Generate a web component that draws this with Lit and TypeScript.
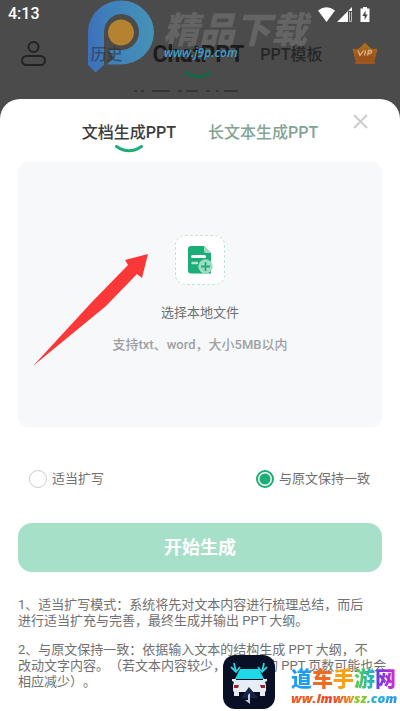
import { LitElement, html, css, svg } from "lit";
import { customElement, state } from "lit/decorators.js";

@customElement("app-root")
export class AppRoot extends LitElement {
  @state() private mode = "keep";

  static styles = css`
    :host {
      display: block;
      position: relative;
      min-height: 100vh;
      overflow: hidden;
      background: #4b4b4b;
      color: #707070;
      font-family: Roboto, "Noto Sans CJK SC", sans-serif;
      font-size: 13px;
      line-height: 16px;
      text-spacing-trim: space-all;
    }
    * { box-sizing: border-box; }
    svg { display: block; flex: none; }
    button {
      font: inherit;
      color: inherit;
      border: 0;
      padding: 0;
      margin: 0;
      background: none;
    }
    .page { display: flex; flex-direction: column; min-height: 100vh; }
    .status {
      display: flex;
      align-items: center;
      justify-content: space-between;
      height: 28px;
      padding: 0 30px 0 8px;
      color: #fff;
      font-size: 16px;
      font-weight: 500;
    }
    .status-icons { display: flex; align-items: center; gap: 2px; }
    .battery { margin-left: 6px; }
    .nav {
      position: relative;
      z-index: 1;
      display: flex;
      align-items: center;
      justify-content: space-between;
      height: 52px;
      padding: 0 22px 0 20px;
      color: #262626;
    }
    .nav-tabs {
      display: flex;
      align-items: center;
      gap: 16px;
      padding: 2px 0 0 14px;
      font-size: 16px;
      line-height: 24px;
      font-weight: 500;
    }
    .history { opacity: 0.5; width: 46px; }
    .current { font-size: 23px; font-weight: 700; color: #1c1c1c; position: relative; }
    .smile { position: absolute; left: 50%; top: 100%; transform: translateX(-50%); }
    .current .smile { margin-top: 4px; }
    .peek { height: 19px; padding-top: 10px; }
    .peek svg { margin: 0 auto; }
    .sheet {
      flex: 1;
      background: #fff;
      border-radius: 20px 20px 0 0;
      padding: 13px 18px 20px;
    }
    .sheet-head {
      display: grid;
      grid-template-columns: minmax(0, 1fr) auto auto minmax(0, 1fr);
      height: 50px;
      align-items: start;
    }
    .tab {
      position: relative;
      margin-top: 9px;
      font-size: 16px;
      line-height: 24px;
      font-weight: 500;
      color: #83a394;
      white-space: nowrap;
    }
    .tab.active { grid-column: 2; margin-right: 32px; color: #3c3c3c; }
    .close { justify-self: end; margin: 2px 14px 0 0; }
    .drop {
      display: flex;
      flex-direction: column;
      align-items: center;
      width: 100%;
      height: 265px;
      padding-top: 73px;
      border-radius: 10px;
      background: #f6f8fa;
      line-height: 20px;
    }
    .file {
      display: flex;
      align-items: center;
      justify-content: center;
      width: 50px;
      height: 50px;
      border: 1px dashed #c3e3d6;
      border-radius: 10px;
      background: #fff;
      margin-bottom: 18px;
    }
    .hint { margin-top: 12px; font-weight: 500; color: #a0a0a0; }
    .modes {
      display: flex;
      justify-content: space-between;
      margin: 0;
      padding: 42px 12px 34px 11px;
      border: 0;
    }
    .mode { display: flex; align-items: center; gap: 5px; line-height: 20px; }
    .mode input {
      appearance: none;
      width: 18px;
      height: 18px;
      margin: 0;
      border: 1px solid #ccc;
      border-radius: 50%;
      background: #fff;
    }
    .mode input:checked {
      border: 2px solid #1bae76;
      background: radial-gradient(circle, #1bae76 5px, #fff 6px);
    }
    .start {
      width: 100%;
      height: 49px;
      border-radius: 14px;
      background: #a7e0c9;
      color: #fff;
      font-size: 18px;
      font-weight: 700;
    }
    .notes { padding-top: 25px; white-space: nowrap; }
    .notes p { margin: 0 0 13px; }
    .overlay { position: absolute; pointer-events: none; }
    .arrow { left: 32px; top: 252px; }
    .p-logo { left: 86px; top: 0; }
    .mark {
      left: 163px;
      top: 7px;
      color: #646464;
      font-size: 36px;
      line-height: 48px;
      font-weight: 900;
      font-style: italic;
    }
    .mark-url {
      z-index: 2;
      left: 164px;
      top: 45px;
      color: #3f9fce;
      font-family: "Open Sans", sans-serif;
      font-size: 12px;
      font-weight: 600;
      font-style: italic;
    }
    .car { left: 223px; top: 655px; }
    .site {
      left: 291px;
      top: 666px;
      font-size: 21px;
      line-height: 26px;
      font-weight: 900;
      color: transparent;
      background: linear-gradient(90deg, #1e9df0 0 18%, #f26a20 21% 38%, #f7a11b 42% 58%, #62c94a 62%, #19b4c8 78%, #6a3ae0 82%, #d92ad0);
      background-clip: text;
    }
    .site-url {
      left: 291px;
      top: 689px;
      padding-right: 3px;
      font-family: "Open Sans", sans-serif;
      font-size: 13px;
      line-height: 18px;
      font-weight: 800;
      font-style: italic;
      color: transparent;
      background: linear-gradient(90deg, #ef5a20 0 25%, #f0392b 36%, #f28a1c 54%, #8ac926 60% 68%, #20b5d5 74%, #2e8ff0);
      background-clip: text;
    }
  `;

  private smile(color: string) {
    return html`<svg class="smile" width="28" height="8" viewBox="0 0 28 8" aria-hidden="true">
      ${svg`<path d="M1.5 1.5 Q14 10 26.5 1.5" fill="none" stroke=${color} stroke-width="3" stroke-linecap="round"/>`}
    </svg>`;
  }

  private pick(value: string) {
    this.mode = value;
  }

  render() {
    return html`
      <div class="page">
        <div class="status">
          <span>4:13</span>
          <span class="status-icons">
            <svg width="17" height="15" viewBox="0 0 17 15"><path d="M0 3.5Q8.5-3 17 3.5L8.5 15Z" fill="#fff"/></svg>
            <svg width="15" height="15" viewBox="0 0 15 15"><path d="M15 0V4H11V15H0Z" fill="#fff"/><path d="M12.5 5V14.5H14.5V5" fill="none" stroke="#bbb"/></svg>
            <svg class="battery" width="10" height="15" viewBox="0 0 10 15"><path d="M3 0H7V1.5H9.5V15H.5V1.5H3Z" fill="#fff"/><path d="M5.6 3.5 2.3 9H4.6V13L7.8 7.5H5.6Z" fill="#4b4b4b"/></svg>
          </span>
        </div>
        <nav class="nav">
          <svg width="27" height="27" viewBox="0 0 27 27" fill="none" stroke="#222" stroke-width="2"><circle cx="13.5" cy="6" r="5"/><rect x="2" y="15" width="23" height="9" rx="4.5"/></svg>
          <span class="nav-tabs">
            <span class="history">历史</span>
            <span class="current">ChatPPT${this.smile("#126846")}</span>
            <span>PPT模板</span>
          </span>
          <svg width="26" height="24" viewBox="0 0 26 24">
            <defs><linearGradient id="vip" x2="0" y2="1"><stop stop-color="#b0741c"/><stop offset="1" stop-color="#9c4a18"/></linearGradient></defs>
            <path d="M1 7Q5 9 8 6L13 1 18 6Q21 9 25 7L22 18H4Z" fill="url(#vip)" stroke="#a8661a" stroke-linejoin="round"/>
            <rect x="3" y="19" width="20" height="3" rx="1" fill="#a4561a"/>
            <path d="M6 8.5 8 13.5 11.5 8.5M13.5 8.5 12.5 13.5M15.5 13.5 16.5 8.5H19Q20.5 10.5 18 11.5H16.5" fill="none" stroke="#d5b48f" stroke-width="1.3"/>
          </svg>
        </nav>
        <div class="peek"><svg width="136" height="2" viewBox="0 0 136 2" aria-hidden="true"><path d="M2 1H5M9 1H12M20 1H38M46 1H50M54 1H66M74 1H78M84 1H87M92 1H106" stroke="#222" stroke-width="1"/></svg></div>
        <main class="sheet">
          <div class="sheet-head">
            <button class="tab active">文档生成PPT${this.smile("#1bae76")}</button>
            <button class="tab">长文本生成PPT</button>
            <button class="close" aria-label="关闭"><svg width="15" height="15" viewBox="0 0 15 15"><path d="M1 1 14 14M14 1 1 14" stroke="#ccc" stroke-width="2"/></svg></button>
          </div>
          <button class="drop">
            <span class="file">
              <svg width="26" height="28" viewBox="0 0 26 28">
                <path d="M4 0H17L24 7V27.5H4Q1 27.5 1 24.5V3Q1 0 4 0Z" fill="#1bae76"/>
                <path d="M17 0 24 7H19Q17 7 17 5Z" fill="#a3dcc5"/>
                <path d="M5.5 10.5H17.5" stroke="#fff" stroke-width="3" stroke-linecap="round"/>
                <path d="M5.5 17H10" stroke="#b4e3d1" stroke-width="2.5" stroke-linecap="round"/>
                <circle cx="18.5" cy="20.5" r="7.2" fill="#9fdbc3"/>
                <path d="M18.5 16V25M14 20.5H23" stroke="#1bae76" stroke-width="1.8"/>
              </svg>
            </span>
            <span>选择本地文件</span>
            <span class="hint">支持txt、word，大小5MB以内</span>
          </button>
          <fieldset class="modes">
            <label class="mode"><input type="radio" name="mode" .checked=${this.mode === "expand"} @change=${() => this.pick("expand")}>适当扩写</label>
            <label class="mode"><input type="radio" name="mode" .checked=${this.mode === "keep"} @change=${() => this.pick("keep")}>与原文保持一致</label>
          </fieldset>
          <button class="start">开始生成</button>
          <div class="notes">
            <p>1、适当扩写模式：系统将先对文本内容进行梳理总结，而后<br>进行适当扩充与完善，最终生成并输出 PPT 大纲。</p>
            <p>2、与原文保持一致：依据输入文本的结构生成 PPT 大纲，不<br>改动文字内容。（若文本内容较少，则生成的 PPT 页数可能也会<br>相应减少）。</p>
          </div>
        </main>
      </div>

      <svg class="overlay p-logo" width="70" height="74" viewBox="0 0 70 74" aria-hidden="true">
        <defs><linearGradient id="ring" x1="0" y1="0.6" x2="1" y2="0.5"><stop stop-color="#3d6fba"/><stop offset="0.3" stop-color="#3f7fba"/><stop offset="1" stop-color="#4592b8"/></linearGradient></defs>
        <path d="M2 31A33 32 0 1 1 35 64.5H21L28 57 22 50H35A17.500 18 0 1 0 18 32V65L9.5 72.5 2 65Z" fill="url(#ring)"/>
        <circle cx="35" cy="32.5" r="13" fill="#b5832f"/>
      </svg>
      <span class="overlay mark">精品下载</span>
      <span class="overlay mark-url">www.j9p.com</span>

      <svg class="overlay arrow" width="118" height="116" viewBox="0 0 118 116" aria-hidden="true">
        <path d="M116 2 93 8 96 13 59 51 1 114 74 54 105 22 110 26Z" fill="#fb3838"/>
      </svg>

      <svg class="overlay car" width="52" height="54" viewBox="0 0 52 54" aria-hidden="true">
        <rect width="52" height="54" rx="12" fill="#081026"/>
        <path d="M17 14H36L41 24H12Z" fill="#1fd9e6"/>
        <path d="M9 24H13V25H40V24H44V26L42 27 43 30V36L42 37V41H37V37H16V41H11V37L10 36V30L11 27 9 26Z" fill="#e8edf5"/>
        <path d="M11 30H16L15 33H11ZM42 30H37L38 33H42Z" fill="#8f2734"/>
        <path d="M26 32 35 43H18Z" fill="#172444"/>
        <path d="M27 38V49L22 45H25V40Z" fill="#c2cbe0"/>
        <path d="M11 8 13 17M8 12 13 17 17 12M41 8 39 17M44 12 39 17 35 12" fill="none" stroke="#31cfdd" stroke-width="1.8"/>
      </svg>
      <span class="overlay site">道车手游网</span>
      <span class="overlay site-url">ww.lmwwsz.com</span>
    `;
  }
}
